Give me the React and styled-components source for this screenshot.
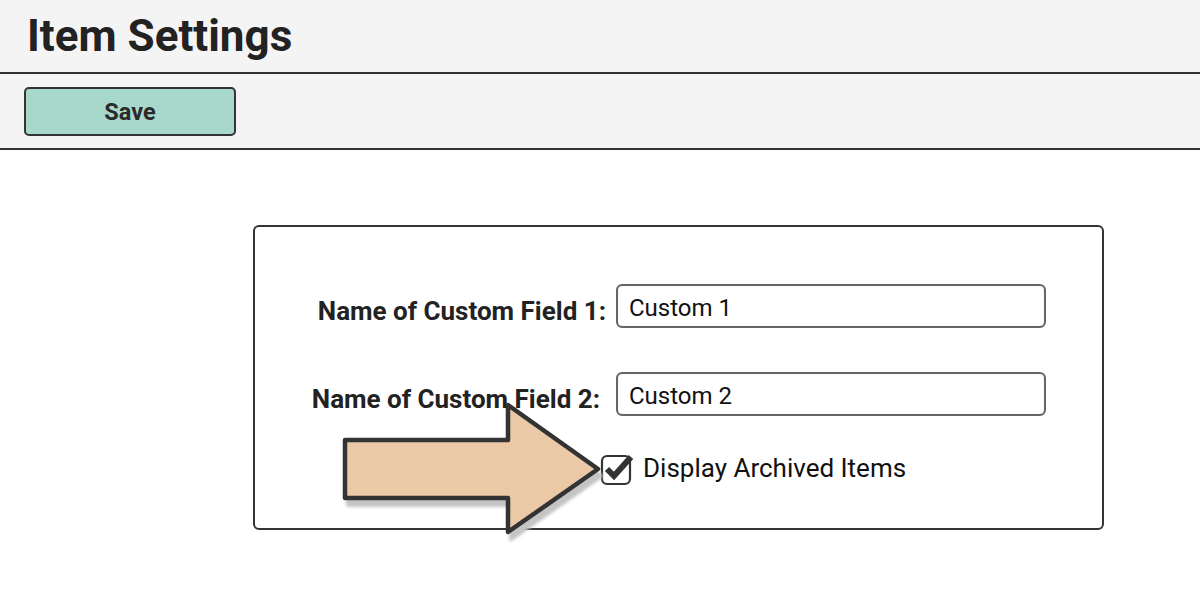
import React from 'react';
import styled, { createGlobalStyle } from 'styled-components';

const Global = createGlobalStyle`
    body {
        margin: 0;
        background: #ffffff;
        font-family: Roboto, "Liberation Sans", sans-serif;
        color: #222;
    }
`;

const Page = styled.div`
    position: relative;
    width: 1200px;
    height: 600px;
    overflow: hidden;
`;

const TitleBar = styled.div`
    height: 72px;
    background: #f4f4f4;
    border-bottom: 2px solid #333;
    padding-left: 27px;
    display: flex;
    align-items: center;
`;

const Title = styled.h1`
    margin: 0;
    font-size: 44px;
    font-weight: 700;
    color: #222;
`;

const Toolbar = styled.div`
    height: 76px;
    background: #f4f4f4;
    border-bottom: 2px solid #333;
    padding-left: 24px;
    display: flex;
    align-items: center;
    box-sizing: border-box;
`;

const SaveButton = styled.button`
    width: 212px;
    height: 49px;
    background: #a8d8cc;
    border: 2px solid #333;
    border-radius: 5px;
    font-family: Roboto, "Liberation Sans", sans-serif;
    font-size: 23.5px;
    font-weight: 700;
    color: #2a2a2a;
    margin-top: 1px;
`;

const Content = styled.div`
    padding: 75px 0 0 253px;
`;

const Panel = styled.div`
    width: 851px;
    height: 305px;
    box-sizing: border-box;
    border: 2px solid #333;
    border-radius: 6px;
    padding-top: 57px;
    display: flex;
    flex-direction: column;
`;

const Row = styled.div`
    display: flex;
    align-items: center;
    height: 44px;
    margin-bottom: ${p => p.$gap}px;
`;

const Label = styled.label`
    width: ${p => 351 - p.$nudge}px;
    padding-right: ${p => 10 + p.$nudge}px;
    text-align: right;
    font-size: 26px;
    font-weight: 700;
    color: #222;
    white-space: nowrap;
    margin-top: 9px;
`;

const Input = styled.input`
    width: 430px;
    height: 44px;
    box-sizing: border-box;
    border: 2px solid #666;
    border-radius: 6px;
    padding: 3px 11px 0;
    font-family: Roboto, "Liberation Sans", sans-serif;
    font-size: 24px;
    color: #111;
    background: #fff;
    box-shadow: inset 0 0 1px rgba(0, 0, 0, 0.3);
`;

const CheckRow = styled.div`
    display: flex;
    align-items: center;
    padding-left: 345px;
    margin-top: -2px;
    gap: 7px;
`;

const CheckText = styled.span`
    font-size: 26px;
    color: #111;
`;

const ArrowLayer = styled.svg`
    position: absolute;
    left: 340px;
    top: 400px;
`;

function CheckBox() {
    return (
        <svg width="36" height="36" viewBox="0 0 36 36">
            <rect x="2" y="6" width="28" height="28" rx="5" fill="#fff" stroke="#333" strokeWidth="2.2" />
            <path d="M7 19 L14 26 L31 7" fill="none" stroke="#333" strokeWidth="6" strokeLinejoin="miter" strokeLinecap="butt" />
        </svg>
    );
}

const arrowPts = '5,40 168,40 168,5 258,69 168,132 168,98 5,98';

function Arrow() {
    return (
        <ArrowLayer width="280" height="150" viewBox="0 0 280 150">
            <defs>
                <filter id="sh" x="-10%" y="-10%" width="130%" height="130%">
                    <feGaussianBlur stdDeviation="1.5" />
                </filter>
            </defs>
            <polygon points={arrowPts} transform="translate(3 7)" fill="#c4c4c4" stroke="#c4c4c4" strokeWidth="4" strokeLinejoin="round" filter="url(#sh)" />
            <polygon points={arrowPts} fill="#ebc8a6" stroke="#333" strokeWidth="4.5" strokeLinejoin="round" />
        </ArrowLayer>
    );
}

export default function App() {
    return (
        <Page>
            <Global />
            <TitleBar>
                <Title>Item Settings</Title>
            </TitleBar>
            <Toolbar>
                <SaveButton>Save</SaveButton>
            </Toolbar>
            <Content>
                <Panel>
                    <Row $gap={44}>
                        <Label $nudge={0}>Name of Custom Field 1:</Label>
                        <Input defaultValue="Custom 1" />
                    </Row>
                    <Row $gap={36}>
                        <Label $nudge={6}>Name of Custom Field 2:</Label>
                        <Input defaultValue="Custom 2" />
                    </Row>
                    <CheckRow>
                        <CheckBox />
                        <CheckText>Display Archived Items</CheckText>
                    </CheckRow>
                </Panel>
            </Content>
            <Arrow />
        </Page>
    );
}
